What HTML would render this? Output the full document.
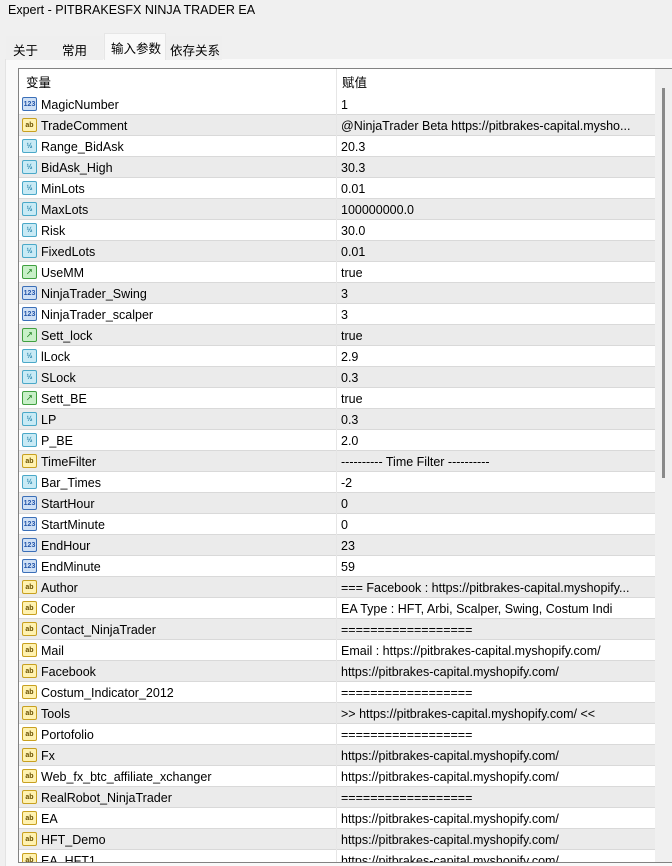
<!DOCTYPE html>
<html><head><meta charset="utf-8"><style>
*{margin:0;padding:0;box-sizing:border-box}
body{width:672px;height:866px;overflow:hidden;background:#f0f0f0;font-family:"Liberation Sans","Noto Sans CJK SC",sans-serif;font-size:12.5px;color:#000;position:relative}
.title{position:absolute;left:8px;top:3px;font-size:12.5px}
.tab{position:absolute;top:36px;height:24px;padding:4px 0 0 0;font-size:12.5px;background:#efefef}
.tab.a{background:#f9f9f9;top:33px;height:27px;border:1px solid #e6e6e6;border-bottom:none}
.pane{position:absolute;left:5px;top:59px;width:667px;height:807px;background:#f9f9f9;border-left:1px solid #e3e3e3}
.list{position:absolute;left:18px;top:68px;width:654px;height:795px;background:#fff;border:1px solid #828282;border-right:none;overflow:hidden}
.hdr{position:absolute;left:0;top:0;width:636px;height:25px;background:#fff}
.hdr span{position:absolute;top:3px}
.row{position:absolute;left:0;width:636px;height:21px;border-bottom:1px solid #d9d9d9}
.row.g{background:#ebebeb}
.row .n{position:absolute;left:22px;top:4px;white-space:nowrap}
.row .v{position:absolute;left:322px;top:4px;white-space:nowrap}
.ic{position:absolute;left:3px;top:3px;width:15px;height:14px;border-radius:2px;font-size:7px;line-height:13px;text-align:center;font-weight:bold}
.i1{background:#cfe0f5;border:1px solid #3b6fb8;color:#2255aa}
.i2{background:#fff2b0;border:1px solid #c8a020;color:#6a5000}
.i3{background:#c8eaf5;border:1px solid #4aa8c8;color:#2080a8}
.i4{background:#c8f0c8;border:1px solid #40a040;color:#208020}
.div{position:absolute;left:317px;top:0;width:1px;height:795px;background:#e6e6e6}
.sb{position:absolute;left:636px;top:0;width:18px;height:795px;background:#f0f0f0}
.th{position:absolute;left:7px;top:19px;width:3px;height:390px;background:#8a8a8a}
</style></head><body>
<div class="title">Expert - PITBRAKESFX NINJA TRADER EA</div>
<div class="pane"></div>
<div class="tab" style="left:6px;width:50px;padding-left:7px">关于</div>
<div class="tab" style="left:55px;width:48px;padding-left:7px">常用</div>
<div class="tab a" style="left:104px;width:62px;padding-left:6px">输入参数</div>
<div class="tab" style="left:166px;width:56px;padding-left:4px">依存关系</div>
<div class="list">
<div class="hdr"><span style="left:7px">变量</span><span style="left:323px">赋值</span></div>
<div id="rows"></div>
<div class="sb"><div class="th"></div></div>
</div>
<script>
var d=[
["1","MagicNumber","1"],["2","TradeComment","@NinjaTrader Beta https://pitbrakes-capital.mysho..."],
["3","Range_BidAsk","20.3"],["3","BidAsk_High","30.3"],["3","MinLots","0.01"],["3","MaxLots","100000000.0"],
["3","Risk","30.0"],["3","FixedLots","0.01"],["4","UseMM","true"],["1","NinjaTrader_Swing","3"],
["1","NinjaTrader_scalper","3"],["4","Sett_lock","true"],["3","lLock","2.9"],["3","SLock","0.3"],
["4","Sett_BE","true"],["3","LP","0.3"],["3","P_BE","2.0"],["2","TimeFilter","---------- Time Filter ----------"],
["3","Bar_Times","-2"],["1","StartHour","0"],["1","StartMinute","0"],["1","EndHour","23"],["1","EndMinute","59"],
["2","Author","=== Facebook : https://pitbrakes-capital.myshopify..."],["2","Coder","EA Type : HFT, Arbi, Scalper, Swing, Costum Indi"],
["2","Contact_NinjaTrader","=================="],["2","Mail","Email : https://pitbrakes-capital.myshopify.com/"],
["2","Facebook","https://pitbrakes-capital.myshopify.com/"],["2","Costum_Indicator_2012","=================="],
["2","Tools",">> https://pitbrakes-capital.myshopify.com/ <<"],["2","Portofolio","=================="],
["2","Fx","https://pitbrakes-capital.myshopify.com/"],["2","Web_fx_btc_affiliate_xchanger","https://pitbrakes-capital.myshopify.com/"],
["2","RealRobot_NinjaTrader","=================="],["2","EA","https://pitbrakes-capital.myshopify.com/"],
["2","HFT_Demo","https://pitbrakes-capital.myshopify.com/"],["2","EA_HFT1","https://pitbrakes-capital.myshopify.com/"]];
var t={"1":"123","2":"ab","3":"½","4":"↗"},h="";
d.forEach(function(r,i){h+='<div class="row'+(i%2?' g':'')+'" style="top:'+(25+i*21)+'px"><div class="ic i'+r[0]+'">'+t[r[0]]+'</div><span class="n">'+r[1]+'</span><span class="v">'+r[2]+'</span></div>';});
document.getElementById("rows").innerHTML=h+'<div class="div"></div>';
</script>
</body></html>
